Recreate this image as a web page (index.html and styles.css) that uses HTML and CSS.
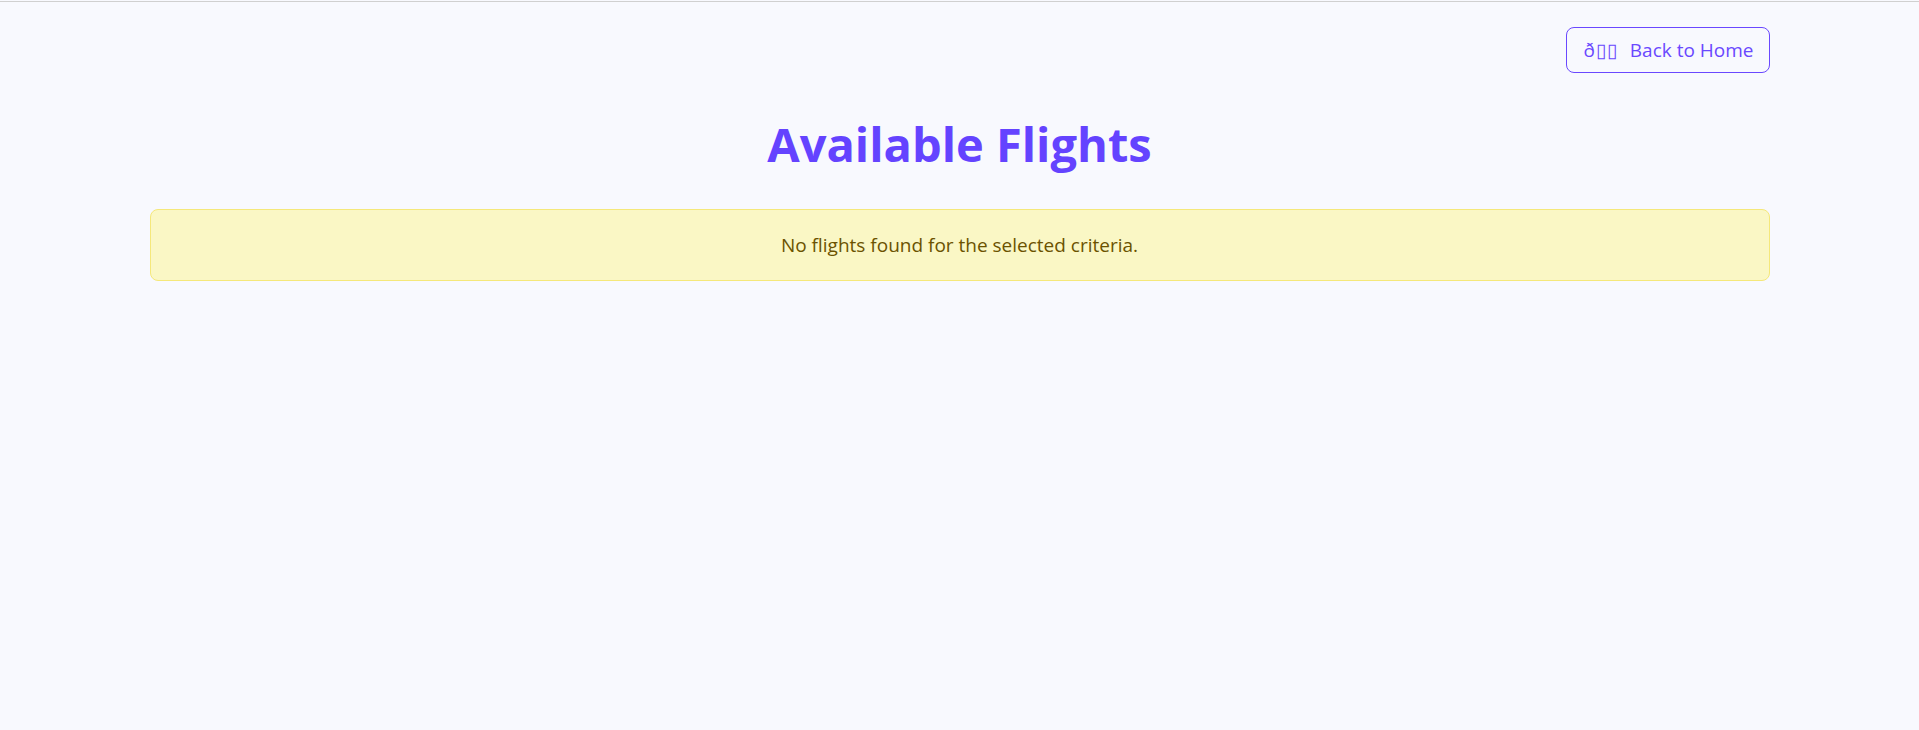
FILE: index.html
```html
<!DOCTYPE html>
<html lang="en">
<head>
<meta charset="utf-8">
<title>Available Flights</title>
<link rel="stylesheet" href="styles.css">
</head>
<body>
<div class="topline"></div>
<main class="page">
  <div class="topbar">
    <a class="back-btn" href="#"><span class="garbled">ð▯▯</span> Back to Home</a>
  </div>
  <h1 class="title">Available Flights</h1>
  <div class="alert">No flights found for the selected criteria.</div>
</main>
</body>
</html>
```

FILE: styles.css
```css
html, body {
  margin: 0;
  padding: 0;
  background: #f8f9fe;
}
body {
  font-family: "Open Sans", "Noto Sans", "Liberation Sans", sans-serif;
  min-height: 730px;
}
.topline {
  height: 1px;
  margin-top: 1px;
  background: #d0d0d0;
}
.page {
  max-width: 1620px;
  margin: 0 auto;
}
.topbar {
  display: flex;
  justify-content: flex-end;
  padding-top: 25px;
}
.back-btn {
  display: inline-flex;
  align-items: center;
  gap: 12px;
  height: 46px;
  box-sizing: border-box;
  padding: 0 15px 0 16px;
  border: 1px solid #6a48ff;
  border-radius: 8px;
  color: #6a48ff;
  font-size: 19px;
  text-decoration: none;
  background: transparent;
}
.garbled {
  letter-spacing: 1px;
}
.title {
  margin: 38px 0 0;
  text-align: center;
  color: #6443ff;
  font-size: 47px;
  font-weight: 700;
  line-height: 66px;
}
.alert {
  margin-top: 32px;
  height: 72px;
  box-sizing: border-box;
  display: flex;
  align-items: center;
  justify-content: center;
  background: #faf7c5;
  border: 1px solid #f5e87a;
  border-radius: 8px;
  color: #6b5200;
  font-size: 19px;
}
```
